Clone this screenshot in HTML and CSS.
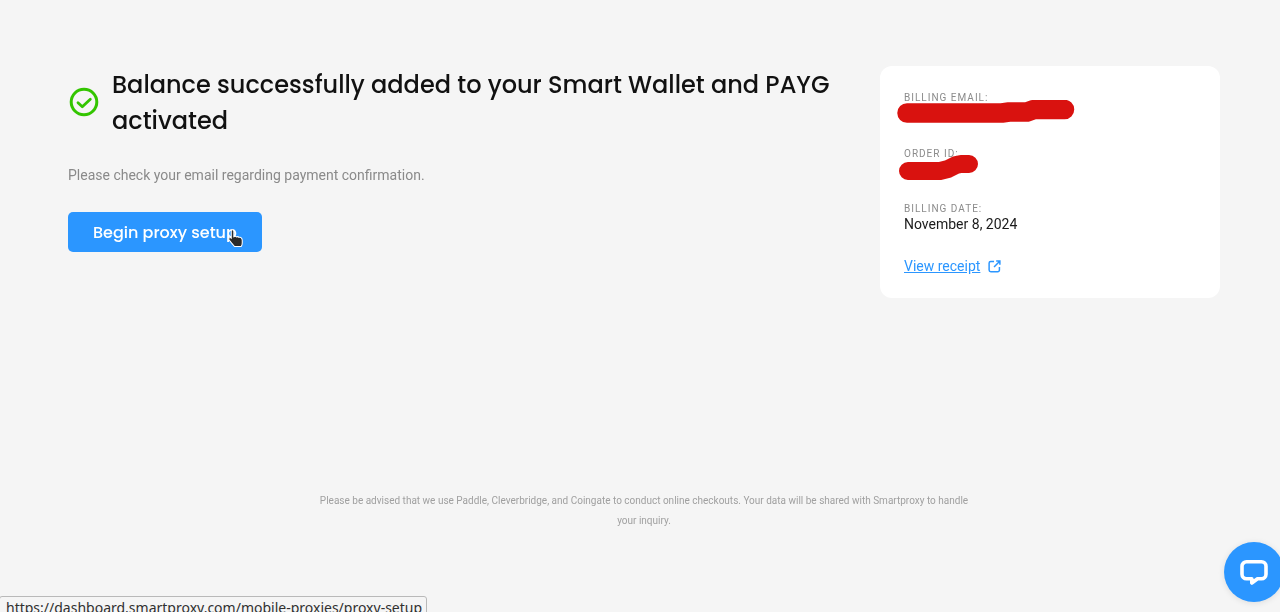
FILE: index.html
```html
<!DOCTYPE html>
<html lang="en">
<head>
<meta charset="utf-8">
<title>Payment successful</title>
<link rel="stylesheet" href="styles.css">
</head>
<body>
<main class="page">
  <div class="content">
    <section class="result">
      <div class="headline">
        <svg class="check" viewBox="0 0 30 30" aria-hidden="true">
          <circle cx="15" cy="15" r="12.800" fill="none" stroke="#33c500" stroke-width="3"/>
          <path d="M9 15.800l4.300 4 8-7.600" fill="none" stroke="#33c500" stroke-width="2.800" stroke-linecap="round" stroke-linejoin="round"/>
        </svg>
        <h1>Balance successfully added to your Smart Wallet and PAYG activated</h1>
      </div>
      <p class="note">Please check your email regarding payment confirmation.</p>
      <div class="action">
        <a class="button" href="#">Begin proxy setup</a>
        <svg class="cursor" viewBox="0 0 18 20" aria-hidden="true">
          <path d="M4.500 1.600c.9 0 1.500.6 1.500 1.500v5.200c.9-.5 1.900-.4 2.500.2.800-.4 1.800-.3 2.400.4.900-.3 1.900 0 2.400.7.500.6.700 1.500.700 2.400v2.400c0 1.500-.4 2.400-1 3.200H6.600c-.6-1-1.600-2-2.700-3.200L1.600 11.600c-.7-.8-.6-1.700 0-2.200.7-.5 1.400-.3 1.900.2V3.100c0-.9.200-1.500 1-1.500z" fill="#2a2a2a" stroke="#fff" stroke-width="1"/>
        </svg>
      </div>
    </section>
    <aside class="card">
      <div class="field field-email">
        <div class="label">BILLING EMAIL:</div>
        <svg class="scribble email" viewBox="0 0 178 24" aria-hidden="true">
          <path d="M10 13H105L112 12H130L137 9.500H167.500" fill="none" stroke="#d9120f" stroke-width="19.500" stroke-linecap="round" stroke-linejoin="round"/>
        </svg>
      </div>
      <div class="field field-order">
        <div class="label">ORDER ID:</div>
        <svg class="scribble order" viewBox="0 0 82 28" aria-hidden="true">
          <path d="M10 18H42L50 16 58 12 63 11H71" fill="none" stroke="#d9120f" stroke-width="18" stroke-linecap="round" stroke-linejoin="round"/>
        </svg>
      </div>
      <div class="field field-date">
        <div class="label">BILLING DATE:</div>
        <div class="value">November 8, 2024</div>
      </div>
      <a class="receipt" href="#">
        <span class="receipt-text">View receipt</span>
        <svg class="external" viewBox="0 0 14 14" aria-hidden="true">
          <path d="M6.500 1.500H3A1.800 1.800 0 0 0 1.200 3.300v7.500A1.800 1.800 0 0 0 3 12.600h7.500a1.800 1.800 0 0 0 1.800-1.800V7.500M8.800 1.200h4v4M12.600 1.400 6.500 7.500" fill="none" stroke="#2b96ff" stroke-width="1.600"/>
        </svg>
      </a>
    </aside>
  </div>
  <footer class="disclaimer">Please be advised that we use Paddle, Cleverbridge, and Coingate to conduct online checkouts. Your data will be shared with Smartproxy to handle your inquiry.</footer>
</main>
<button class="chat" aria-label="Open chat">
  <svg viewBox="0 0 28 28" aria-hidden="true">
    <path d="M6.500 3.800H21.500A4.500 4.500 0 0 1 26 8.300V16.200A4.500 4.500 0 0 1 21.500 20.700H17.500L11.800 25V20.700H6.500A4.500 4.500 0 0 1 2 16.200V8.300A4.500 4.500 0 0 1 6.500 3.800Z" fill="none" stroke="#fff" stroke-width="3.600" stroke-linejoin="round"/>
  </svg>
</button>
<div class="status-url">https://dashboard.smartproxy.com/mobile-proxies/proxy-setup</div>
</body>
</html>
```
FILE: styles.css
```css
* { box-sizing: border-box; }
html, body { margin: 0; height: 100%; overflow: hidden; }
body {
  background: #f5f5f5;
  font-family: Roboto, "Liberation Sans", sans-serif;
  color: #111;
}
.page { padding: 66px 60px 0 68px; will-change: transform; }
.content { display: flex; justify-content: space-between; align-items: flex-start; }
.result { width: 780px; }
.headline { display: flex; align-items: center; gap: 13px; margin: 1px 0 0 1px; }
.check { width: 30px; height: 30px; flex: none; margin-bottom: 3px; }
h1 {
  margin: 0;
  font-family: Poppins, Inter, "Open Sans", sans-serif;
  font-size: 24px;
  line-height: 36px;
  font-weight: 500;
  color: #111;
  max-width: 730px;
}
.note { margin: 26px 0 0; font-size: 14px; line-height: 20px; color: #8a8a8a; }
.action { position: relative; width: 194px; margin-top: 27px; }
.button {
  display: flex;
  align-items: center;
  height: 40px;
  padding-left: 25px;
  background: #2b96ff;
  border-radius: 5px;
  color: #fff;
  text-decoration: none;
  font-family: Poppins, Inter, "Open Sans", sans-serif;
  font-size: 16px;
  font-weight: 500;
  white-space: nowrap;
}
.cursor { position: absolute; left: 159px; top: 16px; width: 20px; height: 21px; }
.card {
  width: 340px;
  height: 232px;
  flex: none;
  background: #fff;
  border-radius: 12px;
  padding: 25px 24px;
}
.field { position: relative; }
.field-email { height: 56px; padding-top: 1px; }
.field-order { height: 55px; padding-top: 1px; }
.field-date { height: 54px; padding-top: 1px; }
.label { font-size: 10px; line-height: 12px; letter-spacing: 1px; color: #8b8b8b; }
.value { font-size: 14px; line-height: 20px; margin-top: -1px; color: #1b1b1b; }
.scribble { position: absolute; display: block; }
.email { left: -7px; top: 9px; width: 178px; height: 24px; }
.order { left: -6px; top: 6px; width: 82px; height: 28px; }
.receipt { display: flex; align-items: center; gap: 8px; color: #2b96ff; font-size: 14px; line-height: 20px; text-decoration: none; }
.receipt-text { text-decoration: underline; }
.external { width: 13px; height: 13px; flex: none; }
.disclaimer {
  width: 660px;
  margin: 193px 0 0 246px;
  font-size: 10px;
  line-height: 20px;
  color: #a0a0a0;
  text-align: center;
}
.chat {
  position: fixed;
  left: 1224px;
  top: 542px;
  width: 60px;
  height: 60px;
  padding: 0;
  border: 0;
  border-radius: 50%;
  background: #2b96ff;
  box-shadow: 0 1px 6px rgba(0,0,0,.1);
  display: flex;
  align-items: center;
  justify-content: center;
}
.chat svg { width: 28px; height: 28px; display: block; }
.status-url {
  position: fixed;
  left: -1px;
  top: 596px;
  width: 428px;
  height: 30px;
  padding: 1px 0 0 6px;
  background: #f5f5f5;
  border: 1px solid #b9b9b9;
  border-radius: 3px;
  font-family: "Noto Sans", sans-serif;
  font-size: 14px;
  line-height: 20px;
  color: #303030;
  white-space: nowrap;
}
```
